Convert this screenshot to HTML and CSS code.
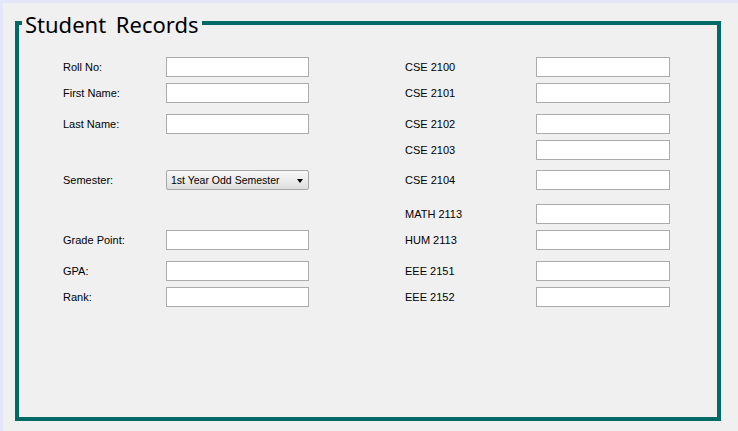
FILE: index.html
```html
<!DOCTYPE html>
<html>
<head>
<meta charset="utf-8">
<title>Student Records</title>
<link rel="stylesheet" href="styles.css">
</head>
<body>
<div class="panel">
  <section class="group">
    <h1 class="group-title">Student Records</h1>
    <div class="rows">
      <div class="row">
        <label class="lbl">Roll No:</label><input class="field" type="text">
        <span class="spacer"></span>
        <label class="lbl">CSE 2100</label><input class="field field-r" type="text">
      </div>
      <div class="row gap6">
        <label class="lbl">First Name:</label><input class="field" type="text">
        <span class="spacer"></span>
        <label class="lbl">CSE 2101</label><input class="field field-r" type="text">
      </div>
      <div class="row gap11">
        <label class="lbl">Last Name:</label><input class="field" type="text">
        <span class="spacer"></span>
        <label class="lbl">CSE 2102</label><input class="field field-r" type="text">
      </div>
      <div class="row gap6">
        <span class="lbl"></span><span class="empty"></span>
        <span class="spacer"></span>
        <label class="lbl">CSE 2103</label><input class="field field-r" type="text">
      </div>
      <div class="row gap10">
        <label class="lbl">Semester:</label>
        <div class="combo"><span class="combo-text">1st Year Odd Semester</span><span class="combo-arrow"></span></div>
        <span class="spacer"></span>
        <label class="lbl">CSE 2104</label><input class="field field-r" type="text">
      </div>
      <div class="row gap14">
        <span class="lbl"></span><span class="empty"></span>
        <span class="spacer"></span>
        <label class="lbl">MATH 2113</label><input class="field field-r" type="text">
      </div>
      <div class="row gap6">
        <label class="lbl">Grade Point:</label><input class="field" type="text">
        <span class="spacer"></span>
        <label class="lbl">HUM 2113</label><input class="field field-r" type="text">
      </div>
      <div class="row gap11">
        <label class="lbl">GPA:</label><input class="field" type="text">
        <span class="spacer"></span>
        <label class="lbl">EEE 2151</label><input class="field field-r" type="text">
      </div>
      <div class="row gap6">
        <label class="lbl">Rank:</label><input class="field" type="text">
        <span class="spacer"></span>
        <label class="lbl">EEE 2152</label><input class="field field-r" type="text">
      </div>
    </div>
  </section>
</div>
</body>
</html>
```

FILE: styles.css
```css
html, body {
  margin: 0;
  padding: 0;
}
body {
  background: #e6e6fa;
  padding: 3px 0 0 3px;
  width: 738px;
  height: 431px;
  box-sizing: border-box;
  overflow: hidden;
  font-family: "Liberation Sans", Arial, sans-serif;
  color: #000;
}
.panel {
  background: #f0f0f0;
  height: 428px;
  width: 735px;
  padding: 18px 0 0 12px;
  box-sizing: border-box;
}
.group {
  position: relative;
  width: 706px;
  height: 400px;
  box-sizing: border-box;
  border: 4px solid #006b66;
  padding: 32px 0 0 44px;
}
.group-title {
  position: absolute;
  left: 3px;
  top: -16px;
  margin: 0;
  padding: 0 3px;
  background: #f0f0f0;
  font-family: "Noto Sans", "Open Sans", sans-serif;
  font-weight: normal;
  font-size: 22px;
  word-spacing: 4px;
  line-height: 30px;
  color: #000;
}
.rows {
  display: flex;
  flex-direction: column;
}
.row {
  display: grid;
  grid-template-columns: 103px 143px 96px 131px 134px;
  align-items: center;
  height: 20px;
}
.gap6 { margin-top: 6px; }
.gap10 { margin-top: 10px; }
.gap11 { margin-top: 11px; }
.gap14 { margin-top: 14px; }
.lbl {
  font-size: 11px;
  line-height: 13px;
  color: #000;
}
.field, .empty {
  width: 100%;
  height: 20px;
  box-sizing: border-box;
  margin: 0;
  padding: 0 3px;
}
.field {
  border: 1px solid #ababab;
  background: #fff;
  outline: none;
}
.combo {
  height: 20px;
  box-sizing: border-box;
  border: 1px solid #a7a7a7;
  border-radius: 2px;
  background: linear-gradient(#f7f7f7, #ececec 50%, #dedede);
  display: flex;
  align-items: center;
  justify-content: space-between;
  padding: 0 5px 0 4px;
}
.combo-text {
  font-size: 10.5px;
  line-height: 12px;
  color: #000;
}
.combo-arrow {
  width: 0;
  height: 0;
  border-left: 3.5px solid transparent;
  border-right: 3.5px solid transparent;
  border-top: 4px solid #000;
  margin-top: 2px;
}
```
